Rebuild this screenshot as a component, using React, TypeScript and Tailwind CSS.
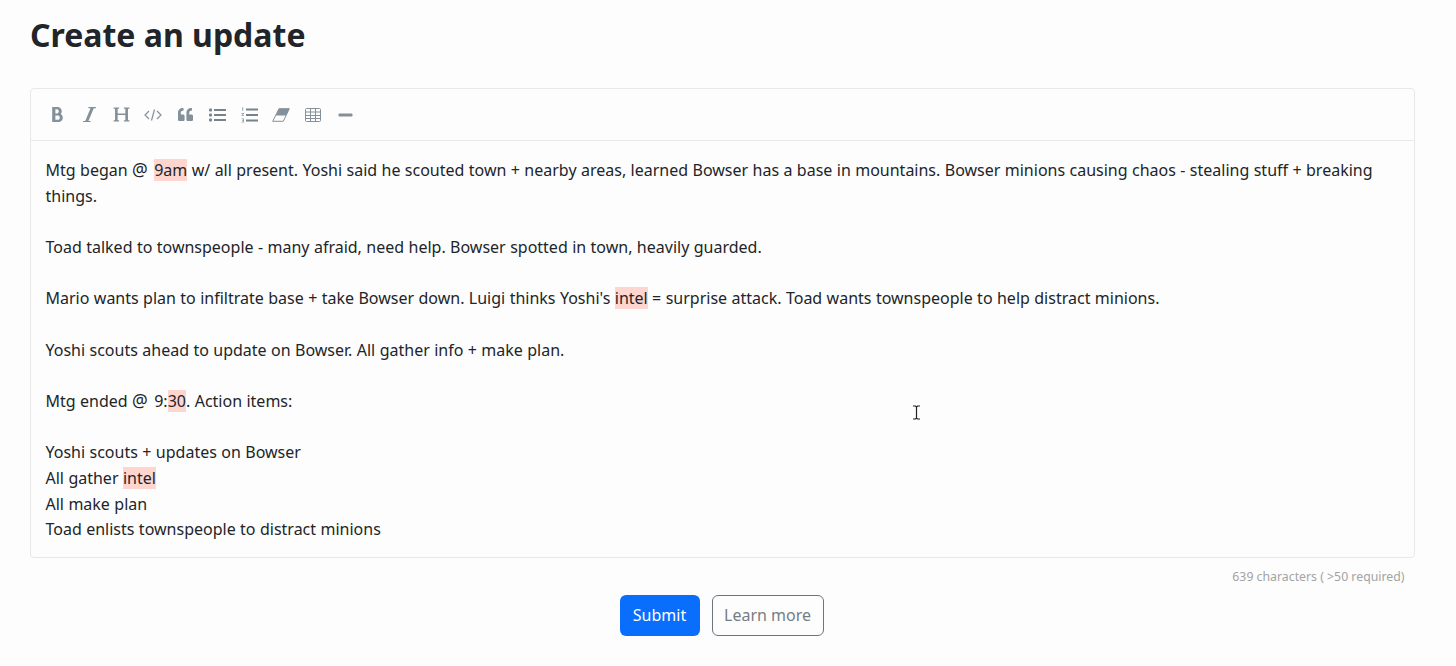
import React from 'react';
import { FaQuoteLeft, FaMinus } from 'react-icons/fa';
import { ImBold, ImItalic } from 'react-icons/im';

const Mark = ({ children }: { children: React.ReactNode }) => (
  <span className="bg-[#ffd5d0]">{children}</span>
);

const At = () => <span className="text-[17.500px] leading-[0] tracking-[2px]">@</span>;

const HeaderIcon = () => (
  <svg viewBox="0 0 18 16" className="w-[17px] h-[15px]" fill="currentColor">
    <path d="M0.5 0.5h6v1.2l-1.6.4v4.9h8.2V2.1l-1.6-.4V0.5h6v1.2l-1.6.4v11.8l1.6.4v1.2h-6v-1.200l1.600-.4V8.400H4.900v5.500l1.600.4v1.200h-6v-1.200l1.600-.4V2.100l-1.600-.4z" />
  </svg>
);

const CodeIcon = () => (
  <svg viewBox="0 0 18 12" className="w-[18px] h-[12px]" fill="none" stroke="currentColor" strokeWidth="1.2">
    <path d="M5 2 1 6l4 4M13 2l4 4-4 4M10.500 0.500 7.500 11.500" />
  </svg>
);

const ListIcon = () => (
  <svg viewBox="0 0 17 14" className="w-[17px] h-[14px] text-[#76838c]" fill="currentColor">
    <rect x="0" y="0.500" width="3" height="3" rx="1" />
    <rect x="0" y="5.500" width="3" height="3" rx="1" />
    <rect x="0" y="10.500" width="3" height="3" rx="1" />
    <rect x="5" y="1" width="12" height="2" />
    <rect x="5" y="6" width="12" height="2" />
    <rect x="5" y="11" width="12" height="2" />
  </svg>
);

const NumberedListIcon = () => (
  <svg viewBox="0 0 17 16" className="w-[17px] h-[16px] text-[#76838c]" fill="currentColor">
    <path d="M1 0.500h1.200v3.500h-.8V1.500H1zM0.500 6h2.500v.8l-1.500 1.200h1.500v.8H0.500v-.8L2 6.800H0.500zM0.500 11.500h2.500v4H0.500v-.8h1.700v-.8H1v-.7h1.200v-.9H0.500z" fillOpacity="0.800" />
    <rect x="5" y="1.500" width="12" height="2" />
    <rect x="5" y="7" width="12" height="2" />
    <rect x="5" y="12.500" width="12" height="2" />
  </svg>
);

const EraserIcon = () => (
  <svg viewBox="0 0 18 14" className="w-[18px] h-[14px]" fill="currentColor">
    <path d="M7 0.700H17.300L11.300 13.300H0.700Z" fill="none" stroke="currentColor" strokeWidth="1" strokeLinejoin="round" />
    <path d="M7 0.700H17.300L14 7.500H3.700Z" />
  </svg>
);

const TableIcon = () => (
  <svg viewBox="0 0 16 14" className="w-[16px] h-[14px]" fill="none" stroke="currentColor" strokeWidth="1">
    <rect x="0.500" y="0.500" width="15" height="13" rx="1" />
    <path d="M0.500 4h15M0.500 7.500h15M0.500 10.500h15M5.500 0.500v13M10.500 0.500v13" />
  </svg>
);

const Slot = ({ children }: { children: React.ReactNode }) => (
  <span className="w-[32px] flex items-center justify-center">{children}</span>
);

export default function App() {
  return (
    <div className="min-h-screen bg-[#fdfdfd] pl-[30px] pr-[41px] pt-[14px] font-['Noto_Sans',sans-serif] text-[#212529] overflow-hidden">
      <h1 className="text-[32px] leading-[42px] font-bold mb-[32px]">Create an update</h1>

      <div className="border border-[#e6e8ea] rounded-[4px]">
        {/* Toolbar */}
        <div className="h-[52px] border-b border-[#e6e8ea] flex items-center pl-[10px] text-[#84919a]">
          <Slot><ImBold className="w-[17px] h-[17px]" /></Slot>
          <Slot><ImItalic className="w-[17px] h-[17px]" /></Slot>
          <Slot><HeaderIcon /></Slot>
          <Slot><CodeIcon /></Slot>
          <Slot><FaQuoteLeft className="w-[17px] h-[15px]" /></Slot>
          <Slot><ListIcon /></Slot>
          <Slot><NumberedListIcon /></Slot>
          <Slot><EraserIcon /></Slot>
          <Slot><TableIcon /></Slot>
          <Slot><FaMinus className="w-[15px] h-[16px]" /></Slot>
        </div>

        {/* Editor content */}
        <div className="relative pl-[14.500px] pr-[15px] pt-[17px] pb-[14px] text-[16px] leading-[25.67px] [word-spacing:0.25px]">
          <p>
            Mtg began <At /> <Mark>9am</Mark> w/ all present. Yoshi said he scouted town + nearby areas, learned Bowser has a base in mountains. Bowser minions causing chaos - stealing stuff + breaking things.
          </p>
          <p className="mt-[25.67px]">Toad talked to townspeople - many afraid, need help. Bowser spotted in town, heavily guarded.</p>
          <p className="mt-[25.67px]">
            Mario wants plan to infiltrate base + take Bowser down. Luigi thinks Yoshi's <Mark>intel</Mark> = surprise attack. Toad wants townspeople to help distract minions.
          </p>
          <p className="mt-[25.67px]">Yoshi scouts ahead to update on Bowser. All gather info + make plan.</p>
          <p className="mt-[25.67px]">
            Mtg ended <At /> 9:<Mark>30</Mark>. Action items:
          </p>
          <p className="mt-[25.67px]">Yoshi scouts + updates on Bowser</p>
          <p>
            All gather <Mark>intel</Mark>
          </p>
          <p>All make plan</p>
          <p>Toad enlists townspeople to distract minions</p>

          {/* Mouse cursor */}
          <svg viewBox="0 0 9 15" className="absolute left-[881px] top-[264px] w-[9px] h-[15px]" fill="none" stroke="#222" strokeWidth="1.2">
            <path d="M1 1h2.500l1 1 1-1H8M4.500 2v11M1 14h2.500l1-1 1 1H8" />
          </svg>
        </div>
      </div>

      <div className="text-right text-[12.300px] leading-[16px] text-[#a3a3a3] pr-[10.500px] mt-[11px]">639 characters ( &gt;50 required)</div>

      <div className="flex justify-center gap-[12px] mt-[10px] pr-[2px]">
        <button className="w-[80px] h-[41px] pb-[1px] rounded-[6px] bg-[#0a6efd] text-white text-[16px]">Submit</button>
        <button className="w-[112px] h-[41px] pb-[2px] rounded-[6px] border border-[#6c757d] text-[#757d84] text-[16px]">Learn more</button>
      </div>
    </div>
  );
}
